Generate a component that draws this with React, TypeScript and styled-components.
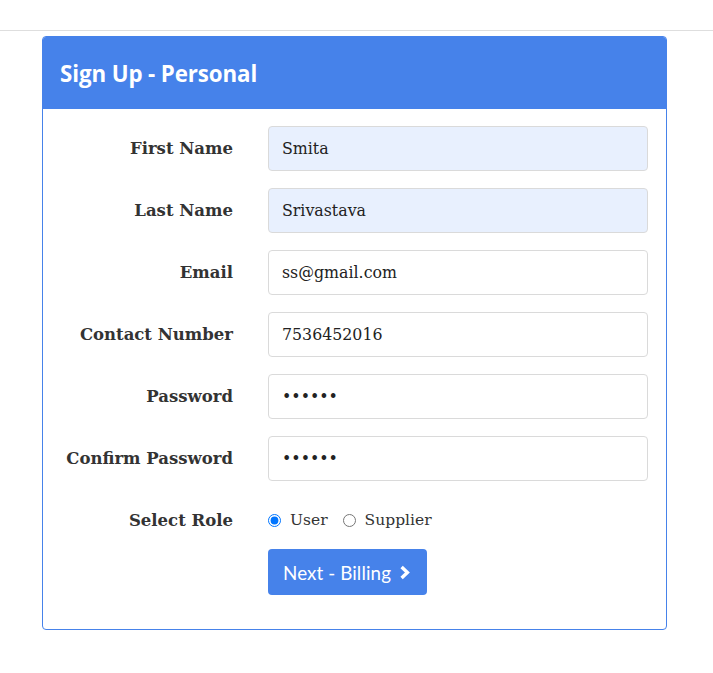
import React from "react";
import styled, { createGlobalStyle } from "styled-components";

const GlobalStyle = createGlobalStyle`
  body {
    margin: 0;
    background: #fff;
  }
`;

const Page = styled.div`
  min-height: 673px;
  background: #fff;
`;

const TopBar = styled.div`
  height: 30px;
  border-bottom: 1px solid #dedede;
`;

const Card = styled.div`
  box-sizing: border-box;
  margin: 5px 0 0 42px;
  width: 625px;
  border: 1px solid #4682ea;
  border-radius: 4px;
  overflow: hidden;
`;

const CardHeader = styled.div`
  height: 72px;
  display: flex;
  align-items: center;
  padding: 0 17px;
  background: #4682ea;
  color: #fff;
  font-family: "Open Sans", Lato, sans-serif;
  font-weight: 700;
  font-size: 22.3px;
  letter-spacing: -0.1px;
`;

const CardBody = styled.div`
  padding: 17px 17px 34px 17px;
`;

const Form = styled.form`
  display: grid;
  grid-template-columns: 173px 380px;
  column-gap: 35px;
  row-gap: 17px;
  align-items: center;
`;

const Label = styled.label`
  text-align: right;
  font-family: "DejaVu Serif", Georgia, serif;
  font-weight: 700;
  font-size: 16.5px;
  color: #333;
`;

const Input = styled.input<{ filled?: boolean }>`
  box-sizing: border-box;
  height: 45px;
  width: 100%;
  padding: 0 13px;
  border: 1px solid #dadada;
  border-radius: 4px;
  background: ${({ filled }) => (filled ? "#e8f0fe" : "#fff")};
  font-family: "DejaVu Serif", Georgia, serif;
  font-size: 15.8px;
  color: #222;
  outline: none;
`;

const RadioGroup = styled.div`
  display: flex;
  align-items: center;
  height: 44px;
  font-family: "DejaVu Serif", Georgia, serif;
  font-size: 15.5px;
  color: #333;
`;

const RadioOption = styled.label`
  display: flex;
  align-items: center;
  margin-right: 15px;

  input {
    margin: 0 9px 0 0;
    width: 13px;
    height: 13px;
    accent-color: #0075ff;
  }
`;

const Spacer = styled.div``;

const NextButton = styled.button`
  justify-self: start;
  margin-top: -10px;
  height: 46px;
  padding: 0 16px 0 15px;
  display: inline-flex;
  align-items: center;
  gap: 8px;
  border: none;
  border-radius: 4px;
  background: #4682ea;
  color: #fff;
  font-family: Lato, "Open Sans", sans-serif;
  font-size: 18.8px;
  letter-spacing: 0.1px;
  cursor: pointer;
`;

const Chevron = () => (
  <svg width="12" height="15" viewBox="0 0 12 15" aria-hidden="true">
    <path
      d="M2.6 2 L8.4 7.5 L2.6 13"
      fill="none"
      stroke="#fff"
      strokeWidth="3.4"
      strokeLinejoin="miter"
    />
  </svg>
);

const fields = [
  { label: "First Name", value: "Smita", type: "text", filled: true },
  { label: "Last Name", value: "Srivastava", type: "text", filled: true },
  { label: "Email", value: "ss@gmail.com", type: "email", filled: false },
  { label: "Contact Number", value: "7536452016", type: "text", filled: false },
  { label: "Password", value: "123456", type: "password", filled: false },
  { label: "Confirm Password", value: "123456", type: "password", filled: false },
];

const App: React.FC = () => {
  return (
    <Page>
      <GlobalStyle />
      <TopBar />
      <Card>
        <CardHeader>Sign Up - Personal</CardHeader>
        <CardBody>
          <Form onSubmit={(e) => e.preventDefault()}>
            {fields.map((f) => (
              <React.Fragment key={f.label}>
                <Label>{f.label}</Label>
                <Input type={f.type} defaultValue={f.value} filled={f.filled} />
              </React.Fragment>
            ))}
            <Label>Select Role</Label>
            <RadioGroup>
              <RadioOption>
                <input type="radio" name="role" defaultChecked />
                User
              </RadioOption>
              <RadioOption>
                <input type="radio" name="role" />
                Supplier
              </RadioOption>
            </RadioGroup>
            <Spacer />
            <NextButton type="submit">
              Next - Billing <Chevron />
            </NextButton>
          </Form>
        </CardBody>
      </Card>
    </Page>
  );
};

export default App;
